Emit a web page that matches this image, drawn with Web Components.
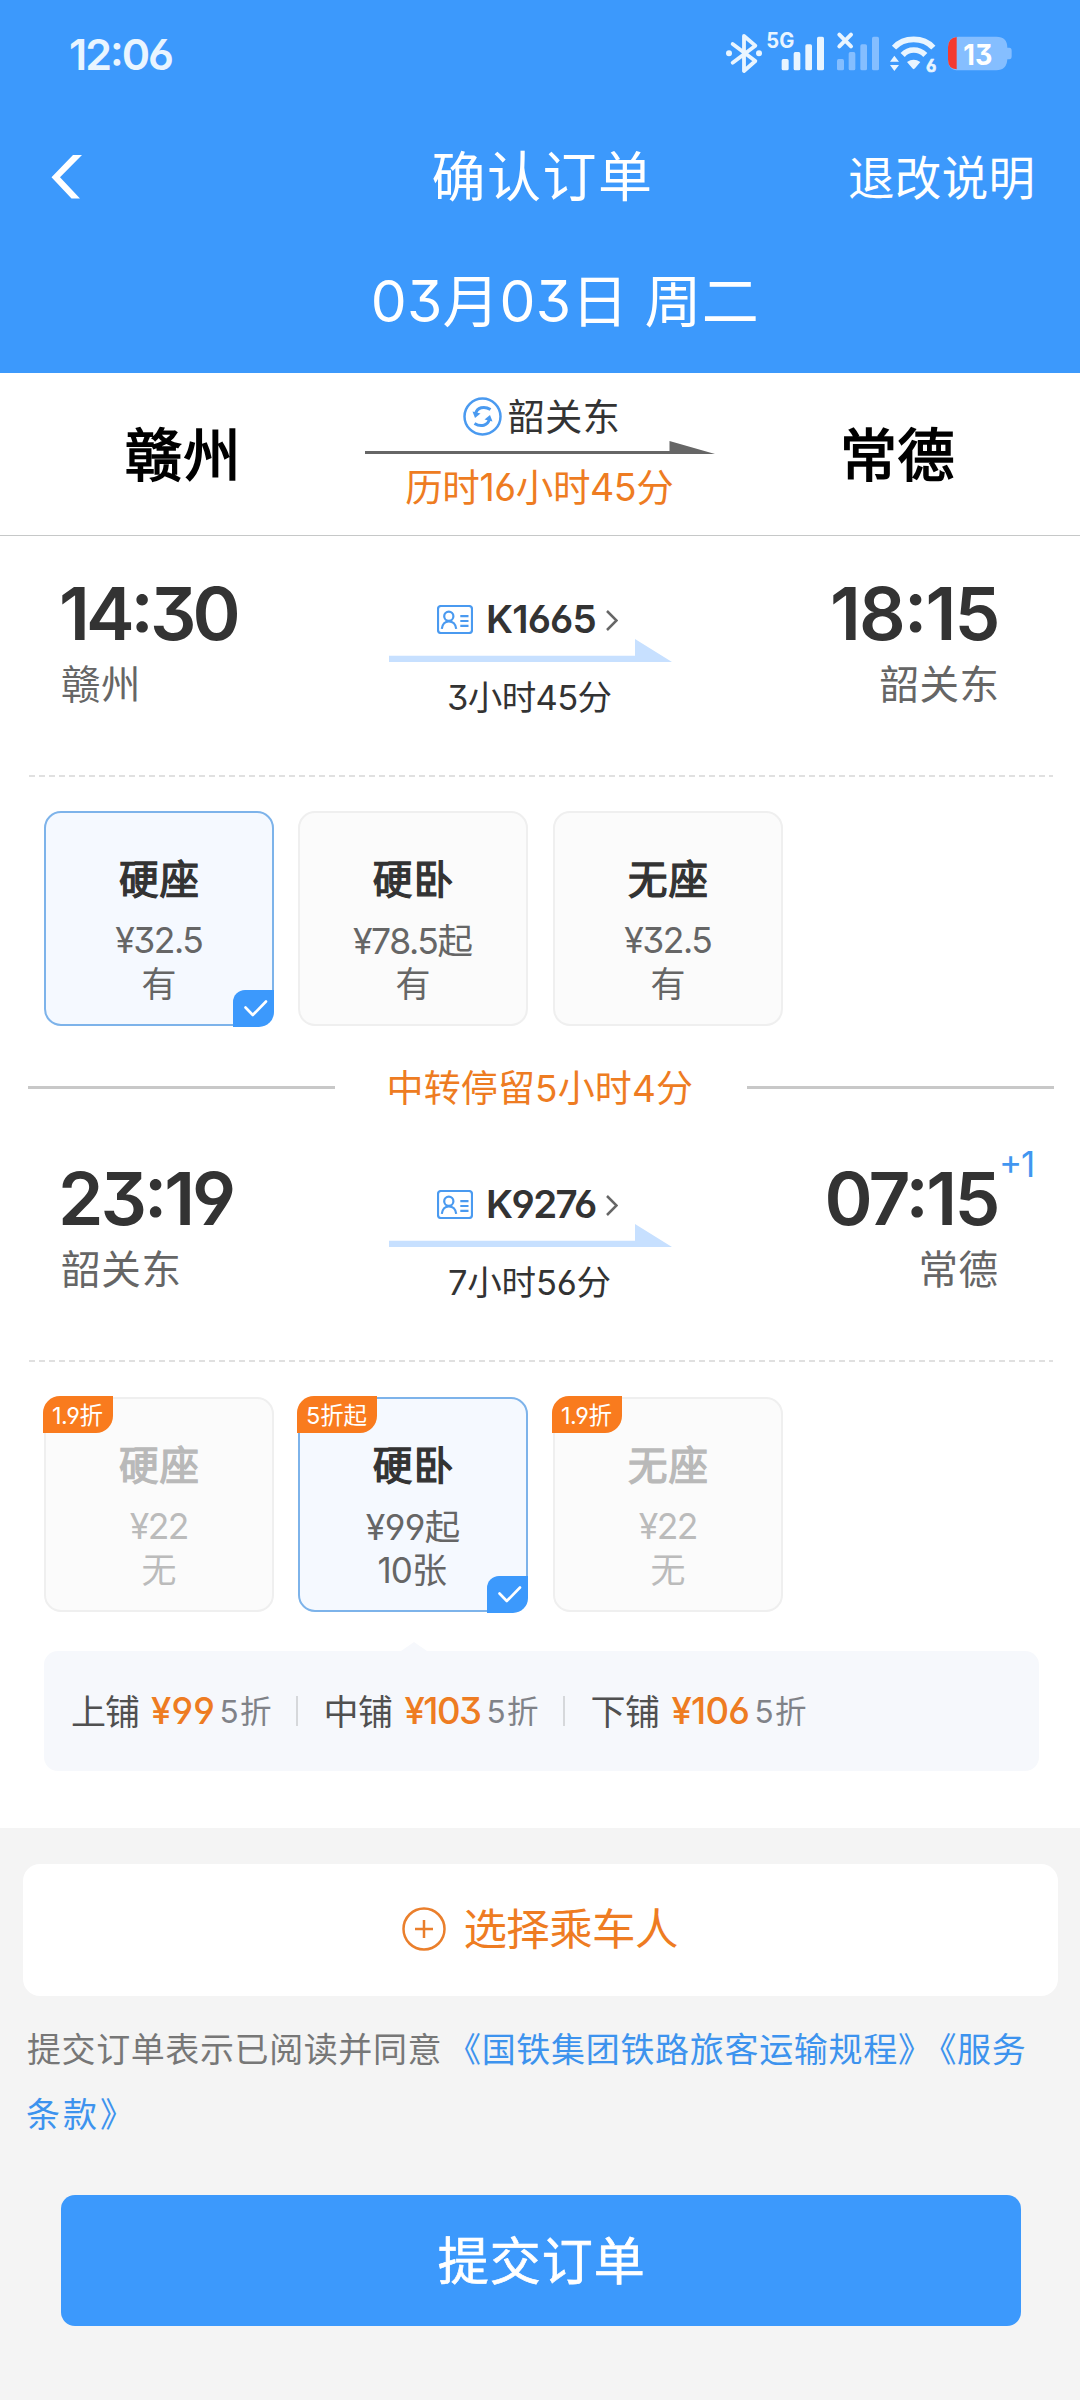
<!DOCTYPE html>
<html lang="zh-CN">
<head>
<meta charset="utf-8">
<title>确认订单</title>
<style>
  html { background: #f4f4f4; }
  body {
    margin: 0; width: 1080px; height: 2400px; overflow: hidden;
    font-family: Inter, "Noto Sans CJK SC", sans-serif;
    font-feature-settings: "cv03", "cv04", "cv09", "calt";
    color: #333;
  }
</style>
</head>
<body>
<order-page></order-page>
<script>
const FAMILY = 'Inter, "Noto Sans CJK SC", sans-serif';
const pen = document.createElement('canvas').getContext('2d');

class Base extends HTMLElement {
  connectedCallback() {
    if (this.shadowRoot) return;
    this.attachShadow({ mode: 'open' }).innerHTML = this.view();
    if (this.ready) this.ready();
  }
  a(name, fallback = '') { return this.getAttribute(name) ?? fallback; }
}

/* A one-line label whose box is its inked width: w = width, s = size, wt = weight, c = colour, b = extra stroke */
customElements.define('ink-text', class extends Base {
  view() {
    const han = /[\u4e00-\u9fff]/.test(this.textContent);
    return `<style>
      :host { display: block; flex: none; width: ${this.a('w')}px; font-size: ${this.a('s')}px;
        font-weight: ${this.a('wt', 400)}; color: ${this.a('c', 'inherit')}; line-height: 1; white-space: nowrap; }
      span { display: inline-block; white-space: pre; text-spacing-trim: space-all;
        padding-top: ${han ? 2 : 0}px; -webkit-text-stroke: ${this.a('b', 0)}px currentColor; }
    </style><span><slot></slot></span>`;
  }
  ready() {
    const text = this.textContent;
    pen.font = `${this.a('wt', 400)} ${this.a('s')}px ${FAMILY}`;
    const m = pen.measureText(text);
    const span = this.shadowRoot.querySelector('span');
    const lsb = -m.actualBoundingBoxLeft, rsb = m.width - m.actualBoundingBoxRight;
    const ink = span.getBoundingClientRect().width - lsb - rsb;
    const track = text.length > 1 ? (+this.a('w') + 1.5 - ink) / (text.length - 1) : 0;
    span.style.letterSpacing = track.toFixed(3) + 'px';
    span.style.marginLeft = (-lsb - 1).toFixed(2) + 'px';
  }
});

customElements.define('status-icons', class extends Base {
  view() {
    return `<style>:host{display:block;width:340px;height:90px} svg{display:block}</style>
    <svg width="340" height="90" viewBox="0 0 1020 270" fill="none" stroke-linecap="round" stroke-linejoin="round" font-family="Inter, sans-serif">
      <g stroke="#e9f5ff" stroke-width="11.500">
        <path d="M98 102 166 153 132 183V78L166 107 98 158"/>
      </g>
      <g fill="#e9f5ff"><circle cx="87" cy="130" r="9"/><circle cx="177" cy="130" r="9"/></g>
      <text x="199" y="113" font-size="63" font-weight="700" fill="#e9f5ff" textLength="84" lengthAdjust="spacingAndGlyphs">5G</text>
      <g fill="#e9f5ff"><rect x="245" y="147" width="21" height="34" rx="5"/><rect x="281" y="126" width="20" height="55" rx="5"/><rect x="316" y="103" width="20" height="78" rx="5"/><rect x="351" y="80" width="21" height="101" rx="5"/></g>
      <g fill="#85beff"><rect x="411" y="147" width="21" height="34" rx="5"/><rect x="446" y="126" width="20" height="55" rx="5"/><rect x="481" y="103" width="20" height="78" rx="5"/><rect x="516" y="80" width="21" height="101" rx="5"/></g>
      <path d="M418 74 453 109M453 74 418 109" stroke="#e9f5ff" stroke-width="12"/>
      <path d="M582 113C612 80 670 80 700 113M608 135C626 115 656 115 676 135" stroke="#e9f5ff" stroke-width="17" stroke-linecap="butt"/>
      <path d="M621 156Q641 142 661 156L645 175Q641 180 637 175Z" fill="#e9f5ff"/>
      <path d="M583 137 597 155H570ZM583 183 597 165H570Z" fill="#e9f5ff"/>
      <text x="678" y="185" font-size="52" font-weight="700" fill="#e9f5ff" stroke="#e9f5ff" stroke-width="2" textLength="31" lengthAdjust="spacingAndGlyphs">6</text>
      <path d="M776 80H889Q922 80 922 113H928Q935 113 935 122V139Q935 148 928 148H922Q920 181 889 181H776Q744 181 744 149V112Q744 80 776 80Z" fill="#85beff"/>
      <path d="M770 81V178Q744 176 744 149V112Q744 84 770 81Z" fill="#f43a30"/>
      <text x="790" y="164" font-size="85" font-weight="700" fill="#fff" textLength="87" lengthAdjust="spacingAndGlyphs">13</text>
    </svg>`;
  }
});

customElements.define('page-header', class extends Base {
  view() {
    return `<style>
      :host { display: block; height: 373px; background: #3c99fc; color: #fff; }
      .status { height: 109px; display: flex; align-items: center; justify-content: space-between; padding: 0 40px 0 71px; }
      .nav { height: 134px; display: grid; grid-template-columns: 1fr auto 1fr; align-items: center; padding: 2px 48px 0 51px; box-sizing: border-box; }
      .nav :last-child { justify-self: end; }
      .date { height: 114px; display: flex; align-items: center; justify-content: center; padding-left: 50px; }
    </style>
    <div class="status"><ink-text w="101" s="43" wt="600" c="#e9f5ff">12:06</ink-text><status-icons></status-icons></div>
    <div class="nav">
      <svg width="31" height="44" viewBox="0 0 31 44" fill="#fff"><path d="M22 0H31L9 22.3 29 43.5H20.500L.5 22.300Z"/></svg>
      <ink-text w="216" s="54">确认订单</ink-text>
      <ink-text w="182" s="46.500">退改说明</ink-text>
    </div>
    <div class="date"><ink-text w="380.500" s="57">03月03日 周二</ink-text></div>`;
  }
});

customElements.define('route-summary', class extends Base {
  view() {
    const turn = '<path d="M12.500 17C14 10.500 21 8.500 27.500 12.500"/><path d="M9.500 14.500 17.500 16.500 12 21Z" fill="#4a9af0" stroke="none"/>';
    return `<style>
      :host { display: grid; grid-template-columns: 363px 354px 363px; height: 162px; background: #fff; border-bottom: 1px solid #c6c8c8; }
      .city { display: flex; align-items: center; justify-content: center; }
      .via { display: flex; flex-direction: column; align-items: center; padding-top: 19px; }
      .row { height: 48px; display: flex; align-items: center; gap: 8px; }
      .line { margin: 1px 0 9px; display: block; }
    </style>
    <div class="city"><ink-text w="107" s="57" b="1.700" c="#000">${this.a('from')}</ink-text></div>
    <div class="via">
      <div class="row">
        <svg width="39" height="39" viewBox="0 0 39 39" fill="none" stroke="#4a9af0" stroke-width="2.500">
          <circle cx="19.500" cy="19.500" r="18"/>
          <g stroke-width="3">${turn}<g transform="rotate(180 19.500 19.500)">${turn}</g></g>
        </svg>
        <ink-text w="107.500" s="37">${this.a('via')}</ink-text>
      </div>
      <svg class="line" width="350" height="13"><path d="M0 10H304.500V0L350 13H0Z" fill="#666"/></svg>
      <div class="row"><ink-text w="265.500" s="37.500" c="#ee7c22">${this.a('duration')}</ink-text></div>
    </div>
    <div class="city"><ink-text w="107" s="57" b="1.700" c="#000">${this.a('to')}</ink-text></div>`;
  }
});

customElements.define('train-leg', class extends Base {
  view() {
    const [dep, depW] = this.a('dep').split('|'), [arr, arrW] = this.a('arr').split('|');
    const [from, fromW] = this.a('from').split('|'), [to, toW] = this.a('to').split('|');
    const [dur, durW] = this.a('duration').split('|');
    return `<style>
      :host { display: grid; grid-template-columns: 389px 283px 1fr; height: 239px; }
      .end { display: flex; flex-direction: column; padding: 37px 0 0 63px; }
      .end.r { align-items: flex-end; padding: 37px 83px 0 0; }
      .time { height: 80px; display: flex; align-items: center; position: relative; }
      .station { height: 64px; display: flex; align-items: center; color: #666; }
      .plus { position: absolute; left: calc(100% + 6px); top: -11px; height: 35px; }
      .mid { padding-top: 64px; }
      .train { height: 39px; display: flex; align-items: center; padding-left: 48px; }
      .train svg:last-child { margin: 1px 0 0 11px; }
      .train ink-text { margin-left: 16px; }
      .bar { display: block; }
      .dur { height: 71px; display: flex; align-items: center; padding-left: 61px; }
    </style>
    <div class="end">
      <div class="time"><ink-text w="${depW}" s="73" wt="600">${dep}</ink-text></div>
      <div class="station"><ink-text w="${fromW}" s="39.500">${from}</ink-text></div>
    </div>
    <div class="mid">
      <div class="train">
        <svg width="36" height="29" viewBox="0 0 36 29" fill="none" stroke="#4a9af0" stroke-width="2.200">
          <rect x="1" y="1" width="34" height="27" rx="3"/>
          <circle cx="11.800" cy="11.200" r="4.600"/><path d="M4.800 23.800C5.500 19 8 16.500 11.800 16.500S18.600 19 19.200 23.800M23.300 11.200H31.500M23.300 16H31.500M23.300 20.800H31.500"/>
        </svg>
        <ink-text w="106" s="38.500" wt="600">${this.a('train')}</ink-text>
        <svg width="12" height="21" viewBox="0 0 12 21" fill="none" stroke="#666" stroke-width="2.500"><path d="M1 1 10.500 10.500 1 20"/></svg>
      </div>
      <svg class="bar" width="283" height="23"><path d="M0 16.700H246V0L283 23H0Z" fill="#c7e0ff"/></svg>
      <div class="dur"><ink-text w="${durW}" s="34.500">${dur}</ink-text></div>
    </div>
    <div class="end r">
      <div class="time"><ink-text w="${arrW}" s="73" wt="600">${arr}</ink-text>${this.a('next') ? `<ink-text class="plus" w="29.500" s="35" c="#4196f0">${this.a('next')}</ink-text>` : ''}</div>
      <div class="station"><ink-text w="${toW}" s="39.500">${to}</ink-text></div>
    </div>`;
  }
});

customElements.define('dash-line', class extends Base {
  view() {
    return `<style>:host{display:block;height:2px;margin:0 27px 0 29px;background:repeating-linear-gradient(90deg,#e0e0e0 0 6px,transparent 6px 10px)}</style>`;
  }
});

customElements.define('seat-card', class extends Base {
  view() {
    const [name, nameW] = this.a('name').split('|'), [price, priceW] = this.a('price').split('|');
    const [left, leftW] = this.a('left').split('|'), [tag, tagW, boxW] = this.a('tag').split('|');
    return `<style>
      :host { display: flex; flex-direction: column; align-items: center; box-sizing: border-box; width: 230px; height: 215px;
        padding-top: 40px; position: relative; border: 2px solid #efefef; border-radius: 17px; background: #fbfbfb; color: #666; --name: #333; }
      :host([selected]) { border-color: #7db3ea; background: #f5f9ff; }
      :host([off]) { color: #bbb; --name: #b9b9b9; }
      div { display: flex; align-items: center; }
      .n { height: 53px; color: var(--name); } .p { height: 70px; } .l { height: 15px; }
      .tag { position: absolute; left: -3px; top: -3px; width: ${boxW}px; height: 37px; justify-content: center; background: #f97b1e; color: #fff; border-radius: 17px 0 17px 0; }
      .tick { position: absolute; right: -2px; bottom: -3px; width: 41px; height: 37px; background: #3c99fc; border-radius: 12px 0 15px 0; }
    </style>
    <div class="n"><ink-text w="${nameW}" s="39.500" b="1.300">${name}</ink-text></div>
    <div class="p"><ink-text w="${priceW}" s="35.500">${price}</ink-text></div>
    <div class="l"><ink-text w="${leftW}" s="35">${left}</ink-text></div>
    ${tag ? `<div class="tag"><ink-text w="${tagW}" s="23.500">${tag}</ink-text></div>` : ''}
    ${this.hasAttribute('selected') ? `<div class="tick"><svg width="41" height="37" fill="none" stroke="#fff" stroke-width="2.600" stroke-linecap="round" stroke-linejoin="round"><path d="M12.500 17.500 19.800 25 33 11.500"/></svg></div>` : ''}`;
  }
});

customElements.define('seat-row', class extends Base {
  view() {
    return `<style>:host{display:flex;gap:24px;padding:34px 0 0 44px} ::slotted(:last-child){margin-left:1px}</style><slot></slot>`;
  }
});

customElements.define('transfer-note', class extends Base {
  view() {
    return `<style>
      :host { display: flex; align-items: center; justify-content: space-between; box-sizing: border-box; height: 95px; padding: 28px 26px 0 28px; }
      i { width: 307px; height: 3px; background: #c8c8c8; }
    </style><i></i><ink-text w="301" s="37" c="#ee7c22">${this.a('text')}</ink-text><i></i>`;
  }
});

customElements.define('berth-panel', class extends Base {
  view() {
    const items = [['上铺', 65.5, '¥99', 60.5, 48, 13.5], ['中铺', 64, '¥103', 74, 48, 14], ['下铺', 66, '¥106', 75, 48, 14]];
    return `<style>
      :host { display: flex; align-items: center; box-sizing: border-box; margin: 39px 41px 0 44px; height: 120px; padding-left: 29px; border-radius: 14px; background: #f6f8fc; position: relative; }
      :host::before { content: ""; position: absolute; left: 357px; top: -9px; border: 13px solid transparent; border-top: 0; border-bottom: 9px solid #f6f8fc; }
      .item { display: flex; align-items: center; }
      .item + .item { margin-left: 25px; padding-left: 30px; border-left: 2px solid #d6d8db; height: 30px; }
      .item:last-child { padding-left: 28px; }
    </style>${items.map(([n, nw, p, pw, dw, g]) => `<div class="item">
      <ink-text w="${nw}" s="35" c="#505050">${n}</ink-text>
      <ink-text style="margin-left:${g}px" w="${pw}" s="36.500" wt="500" c="#ee7c22">${p}</ink-text>
      <ink-text style="margin-left:10px" w="${dw}" s="31.500" c="#808288">5折</ink-text></div>`).join('')}`;
  }
});

customElements.define('passenger-button', class extends Base {
  view() {
    return `<style>
      :host { display: flex; align-items: center; justify-content: center; gap: 20px; margin: 36px 22px 0 23px; height: 132px; padding: 0 3px 2px 0; box-sizing: border-box; border-radius: 17px; background: #fff; }
    </style>
    <svg width="44" height="44" fill="none" stroke="#ea7f2c" stroke-width="2.500"><circle cx="22" cy="22" r="20.500"/><path d="M13 22H31M22 13V31"/></svg>
    <ink-text w="211" s="43.500" c="#ee7c22">选择乘车人</ink-text>`;
  }
});

customElements.define('terms-note', class extends Base {
  view() {
    return `<style>
      :host { display: block; padding: 20px 0 0 28px; color: #777; }
      div { display: flex; align-items: center; gap: 26px; height: 65px; }
      b { font-weight: inherit; letter-spacing: -9.500px; }
    </style>
    <div><ink-text w="411" s="34">提交订单表示已阅读并同意</ink-text>
      <ink-text w="560" s="34" c="#3d93ee">《国铁集团铁路旅客运输规程<b>》</b>《服务</ink-text></div>
    <div><ink-text w="87.500" s="34" c="#3d93ee">条款》</ink-text></div>`;
  }
});

customElements.define('submit-button', class extends Base {
  view() {
    return `<style>:host{display:flex;align-items:center;justify-content:center;height:131px;margin:49px 59px 0 61px;border-radius:14px;background:#3c99fc;color:#fff}</style>
    <ink-text w="202.500" s="51" wt="400" b=".7">${this.a('label')}</ink-text>`;
  }
});

customElements.define('order-page', class extends Base {
  view() {
    return `<style>
      :host { display: block; height: 2400px; background: #f4f4f4; }
      .sheet { background: #fff; height: 1292px; }
      .second { padding-top: 35px; }
    </style>
    <page-header></page-header>
    <route-summary from="赣州" to="常德" via="韶关东" duration="历时16小时45分"></route-summary>
    <div class="sheet">
      <train-leg dep="14:30|174" arr="18:15|163" from="赣州|73.500" to="韶关东|115.500" train="K1665" duration="3小时45分|161"></train-leg>
      <dash-line></dash-line>
      <seat-row>
        <seat-card selected name="硬座|76" price="¥32.5|85.500" left="有|31"></seat-card>
        <seat-card name="硬卧|76.500" price="¥78.5起|118" left="有|31"></seat-card>
        <seat-card name="无座|76" price="¥32.5|85.500" left="有|31"></seat-card>
      </seat-row>
      <transfer-note text="中转停留5小时4分"></transfer-note>
      <train-leg dep="23:19|170" arr="07:15|168.500" next="+1" from="韶关东|116" to="常德|74.500" train="K9276" duration="7小时56分|160"></train-leg>
      <dash-line></dash-line>
      <seat-row class="second">
        <seat-card off name="硬座|76" price="¥22|56.500" left="无|31" tag="1.9折|48|70"></seat-card>
        <seat-card selected name="硬卧|76.500" price="¥99起|92.500" left="10张|67" tag="5折起|58|80"></seat-card>
        <seat-card off name="无座|76" price="¥22|56.500" left="无|31" tag="1.9折|48|70"></seat-card>
      </seat-row>
      <berth-panel></berth-panel>
    </div>
    <passenger-button></passenger-button>
    <terms-note></terms-note>
    <submit-button label="提交订单"></submit-button>`;
  }
});
</script>
</body>
</html>
